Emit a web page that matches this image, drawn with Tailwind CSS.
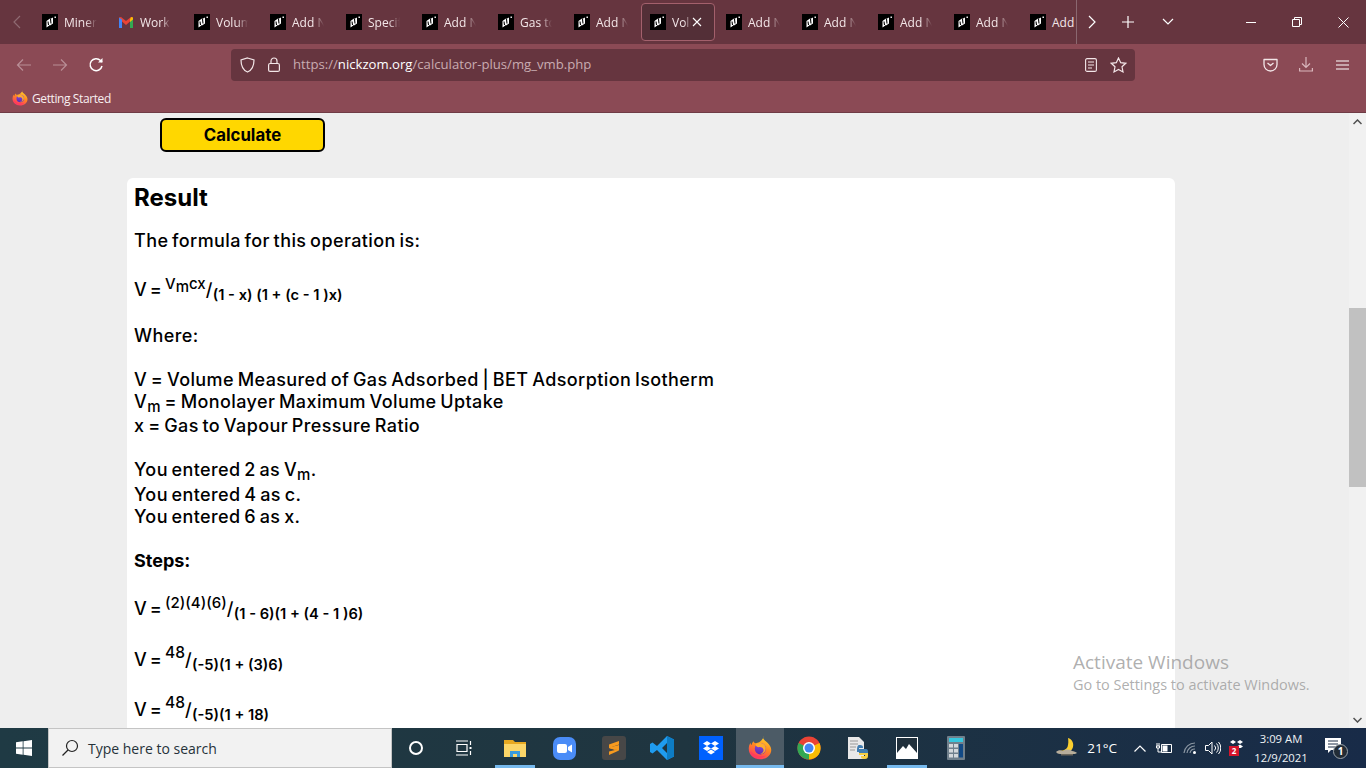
<!doctype html>
<html lang="en">
<head>
<meta charset="utf-8">
<title>Volume Calculator</title>
<script src="https://cdn.jsdelivr.net/npm/@tailwindcss/browser@4"></script>
</head>
<body class="h-screen w-screen overflow-hidden bg-[#eeeeee] font-['Inter',sans-serif]">
<svg class="absolute h-0 w-0" width="0" height="0">
  <defs>
    <linearGradient id="fxa" x1="0.75" y1="0" x2="0.3" y2="1"><stop offset="0" stop-color="#ffd92e"/><stop offset=".45" stop-color="#ff8a1f"/><stop offset="1" stop-color="#ff2f68"/></linearGradient>
    <linearGradient id="fxb" x1="0.6" y1="0" x2="0.4" y2="1"><stop offset="0" stop-color="#8f4fe0"/><stop offset="1" stop-color="#5b2bb0"/></linearGradient>
  </defs>
  <symbol id="fav" viewBox="0 0 16 16">
    <rect width="16" height="16" fill="#000"/>
    <path d="M4.500 7 8 4.500V5L11 3.500V9.500L8 11.500V11L4.500 13.500Z" fill="#fff"/>
    <path d="M6 7.500 6.500 11M8.500 5 9 9.500" stroke="#000" stroke-width="1.100"/>
    <path d="M12.500 2.500h1.400v1.400h-1.400z" fill="#fff"/>
  </symbol>
  <symbol id="fx" viewBox="0 0 32 32">
    <path d="M20 1c0 4 3 5 6 8 3 3 5 6 5 9.500C31 25.500 24.500 31 16 31S1 25 1 17c0-3 .8-5.500 2.200-8 .2 1.500.8 2.500 1.800 3 0-2 1-3.700 2.500-5 0 1.500 1 2.500 3 2.500 3-.5 6-2 7.500-4 1.500-1.500 2.500-3 2.500-4.500z" fill="url(#fxa)"/>
    <circle cx="16.500" cy="17" r="7.500" fill="url(#fxb)"/>
    <path d="M10 11c5-3.500 12-1.500 13.500 4 1 4.500-2.500 9-7.500 9 3.500-1 5.500-3.500 4.500-6.500-1-2.500-4-3.500-6.500-2.500-1.500 0-3.500-1-4-4z" fill="#ffae2b"/>
    <path d="M3 20c1 5 6 9 13 9 3 0 6-1 8-3-6 2-15 1-21-6z" fill="#ff3a5e"/>
  </symbol>
</svg>

<div class="flex h-full flex-col">
  <!-- tab strip -->
  <div class="flex h-[44px] shrink-0 items-center bg-[#66353f] text-[12px] font-['Open_Sans',sans-serif] text-[#f3e6e8]">
    <div class="flex w-[32px] shrink-0 justify-center pl-[2px]">
      <svg width="10" height="14" viewBox="0 0 10 14" fill="none" stroke="#8f6a72" stroke-width="1.200"><path d="M8 1 2 7l6 6"/></svg>
    </div>
    <div class="flex h-full w-[1044px] shrink-0 overflow-hidden">
      <div class="flex h-full w-[76px] shrink-0 items-center gap-[6px] pl-[10px]"><svg class="shrink-0" width="16" height="16"><use href="#fav"/></svg><span class="mt-[2px] w-[33px] overflow-hidden whitespace-nowrap [mask-image:linear-gradient(to_right,black_65%,transparent)]">Minera</span></div>
      <div class="flex h-full w-[76px] shrink-0 items-center gap-[6px] pl-[10px]">
        <svg class="shrink-0" width="16" height="16" viewBox="0 0 16 16"><path d="M1 14V3.500L3 3l5 4 5-4 2 .5V14h-3V7.500L8 11 4 7.500V14z" fill="#ea4335"/><path d="M1 14V3.500L4 5.500V14z" fill="#4285f4"/><path d="M15 14V3.500L12 5.500V14z" fill="#34a853"/><path d="M12 5.500 13 3l2 .5v2L12 8z" fill="#fbbc04"/></svg>
        <span class="mt-[2px] w-[30px] overflow-hidden whitespace-nowrap [mask-image:linear-gradient(to_right,black_75%,transparent)]">Work</span></div>
      <div class="flex h-full w-[76px] shrink-0 items-center gap-[6px] pl-[10px]"><svg class="shrink-0" width="16" height="16"><use href="#fav"/></svg><span class="mt-[2px] w-[32px] overflow-hidden whitespace-nowrap [mask-image:linear-gradient(to_right,black_65%,transparent)]">Volume</span></div>
      <div class="flex h-full w-[76px] shrink-0 items-center gap-[6px] pl-[10px]"><svg class="shrink-0" width="16" height="16"><use href="#fav"/></svg><span class="mt-[2px] w-[32px] overflow-hidden whitespace-nowrap [mask-image:linear-gradient(to_right,black_65%,transparent)]">Add New</span></div>
      <div class="flex h-full w-[76px] shrink-0 items-center gap-[6px] pl-[10px]"><svg class="shrink-0" width="16" height="16"><use href="#fav"/></svg><span class="mt-[2px] w-[32px] overflow-hidden whitespace-nowrap [mask-image:linear-gradient(to_right,black_65%,transparent)]">Specific</span></div>
      <div class="flex h-full w-[76px] shrink-0 items-center gap-[6px] pl-[10px]"><svg class="shrink-0" width="16" height="16"><use href="#fav"/></svg><span class="mt-[2px] w-[32px] overflow-hidden whitespace-nowrap [mask-image:linear-gradient(to_right,black_65%,transparent)]">Add New</span></div>
      <div class="flex h-full w-[76px] shrink-0 items-center gap-[6px] pl-[10px]"><svg class="shrink-0" width="16" height="16"><use href="#fav"/></svg><span class="mt-[2px] w-[32px] overflow-hidden whitespace-nowrap [mask-image:linear-gradient(to_right,black_65%,transparent)]">Gas to V</span></div>
      <div class="flex h-full w-[76px] shrink-0 items-center gap-[6px] pl-[10px]"><svg class="shrink-0" width="16" height="16"><use href="#fav"/></svg><span class="mt-[2px] w-[32px] overflow-hidden whitespace-nowrap [mask-image:linear-gradient(to_right,black_65%,transparent)]">Add New</span></div>
      <div class="relative flex h-full w-[76px] shrink-0 items-center gap-[6px] pl-[10px]">
        <div class="absolute top-[3px] left-[1px] h-[38px] w-[74px] rounded-[4px] border border-[#a3606c] bg-[#532f37]"></div>
        <svg class="relative shrink-0" width="16" height="16"><use href="#fav"/></svg>
        <span class="relative mt-[2px] w-[19px] overflow-hidden whitespace-nowrap [mask-image:linear-gradient(to_right,black_65%,transparent)]">Volume</span>
        <svg class="relative -ml-[5px] shrink-0" width="10" height="10" viewBox="0 0 10 10" stroke="#fff" stroke-width="1.100"><path d="M1 1l8 8M9 1 1 9"/></svg>
      </div>
      <div class="flex h-full w-[76px] shrink-0 items-center gap-[6px] pl-[10px]"><svg class="shrink-0" width="16" height="16"><use href="#fav"/></svg><span class="mt-[2px] w-[32px] overflow-hidden whitespace-nowrap [mask-image:linear-gradient(to_right,black_65%,transparent)]">Add New</span></div>
      <div class="flex h-full w-[76px] shrink-0 items-center gap-[6px] pl-[10px]"><svg class="shrink-0" width="16" height="16"><use href="#fav"/></svg><span class="mt-[2px] w-[32px] overflow-hidden whitespace-nowrap [mask-image:linear-gradient(to_right,black_65%,transparent)]">Add New</span></div>
      <div class="flex h-full w-[76px] shrink-0 items-center gap-[6px] pl-[10px]"><svg class="shrink-0" width="16" height="16"><use href="#fav"/></svg><span class="mt-[2px] w-[32px] overflow-hidden whitespace-nowrap [mask-image:linear-gradient(to_right,black_65%,transparent)]">Add New</span></div>
      <div class="flex h-full w-[76px] shrink-0 items-center gap-[6px] pl-[10px]"><svg class="shrink-0" width="16" height="16"><use href="#fav"/></svg><span class="mt-[2px] w-[32px] overflow-hidden whitespace-nowrap [mask-image:linear-gradient(to_right,black_65%,transparent)]">Add New</span></div>
      <div class="flex h-full w-[56px] shrink-0 items-center gap-[6px] pl-[10px]"><svg class="shrink-0" width="16" height="16"><use href="#fav"/></svg><span class="mt-[2px] whitespace-nowrap">Add</span></div>
    </div>
    <div class="flex h-full w-[30px] shrink-0 items-center justify-center border-l border-[#8a6870]">
      <svg width="10" height="14" viewBox="0 0 10 14" fill="none" stroke="#fff" stroke-width="1.200"><path d="M2 1l6 6-6 6"/></svg>
    </div>
    <div class="ml-[14px] flex w-[16px] shrink-0 justify-center">
      <svg width="12" height="12" viewBox="0 0 12 12" stroke="#fff" stroke-width="1.200"><path d="M6 0v12M0 6h12"/></svg>
    </div>
    <div class="ml-[24px] flex w-[16px] shrink-0 justify-center">
      <svg width="12" height="8" viewBox="0 0 12 8" fill="none" stroke="#fff" stroke-width="1.200"><path d="M1 1l5 5 5-5"/></svg>
    </div>
    <div class="ml-auto flex h-full">
      <div class="flex w-[46px] items-center justify-center"><div class="h-px w-[10px] bg-white"></div></div>
      <div class="flex w-[46px] items-center justify-center">
        <svg width="10" height="10" viewBox="0 0 10 10" fill="none" stroke="#fff"><path d="M.5 2.500h7v7h-7zM2.500 2.500v-2h7v7h-2"/></svg>
      </div>
      <div class="flex w-[46px] items-center justify-center">
        <svg width="11" height="11" viewBox="0 0 11 11" stroke="#fff"><path d="M.5.500l10 10M10.500.500l-10 10"/></svg>
      </div>
    </div>
  </div>

  <!-- nav bar -->
  <div class="relative flex h-[41px] shrink-0 items-center bg-[#8b4a55]">
    <div class="flex w-[231px] shrink-0 items-center pl-[16px]">
      <svg width="16" height="14" viewBox="0 0 16 14" fill="none" stroke="#b98e96" stroke-width="1.200"><path d="M15 7H1.500M7 1.500 1.500 7 7 12.500"/></svg>
      <svg class="ml-[20px]" width="16" height="14" viewBox="0 0 16 14" fill="none" stroke="#b98e96" stroke-width="1.200"><path d="M1 7h13.500M9 1.500 14.500 7 9 12.500"/></svg>
      <svg class="ml-[20px]" width="16" height="16" viewBox="0 0 16 16" fill="none" stroke="#fff" stroke-width="1.500"><path d="M14 9a6 6 0 1 1-1.500-5.500L14 5"/><path d="M14.500 1v4.500H10" fill="#fff" stroke="none"/></svg>
    </div>
    <div class="flex h-[32px] w-[904px] shrink-0 items-center rounded-[4px] bg-[#66353f] pr-[8px] pl-[9px] font-['Open_Sans',sans-serif] text-[13.150px] text-[#c9acb1]">
      <svg class="shrink-0" width="15" height="16" viewBox="0 0 15 16" fill="none" stroke="#f3e6e8" stroke-width="1.200"><path d="M7.500 1 14 3c0 6-1.500 10-6.500 12C2.500 13 1 9 1 3z"/></svg>
      <svg class="ml-[13px] shrink-0" width="12" height="15" viewBox="0 0 12 15" fill="none" stroke="#f3e6e8" stroke-width="1.200"><rect x=".6" y="6.500" width="10.800" height="7.900" rx="1.500"/><path d="M3 6.500V4a3 3 0 0 1 6 0v2.500"/></svg>
      <span class="mt-[1px] ml-[13px] whitespace-nowrap">https://<span class="text-white">nickzom.org</span>/calculator-plus/mg_vmb.php</span>
      <svg class="ml-auto shrink-0" width="12" height="14" viewBox="0 0 12 14" fill="none" stroke="#f3e6e8" stroke-width="1.100"><rect x=".6" y=".6" width="10.800" height="12.800" rx="1.500"/><path d="M3 4h6M3 7h6M3 10h4"/></svg>
      <svg class="ml-[13px] shrink-0" width="17" height="16" viewBox="0 0 17 16" fill="none" stroke="#f3e6e8" stroke-width="1.200"><path d="M8.500 1l2.200 4.700 5 .6-3.700 3.500 1 5.100-4.500-2.500L4 14.900l1-5.100L1.300 6.300l5-.6z"/></svg>
    </div>
    <div class="ml-auto flex items-center pr-[17px]">
      <svg width="15" height="14" viewBox="0 0 15 14" fill="none" stroke="#f3e6e8" stroke-width="1.300"><path d="M1 1.500h13v5a6.500 6.500 0 0 1-13 0z M4.500 5l3 2.500 3-2.500" stroke-linejoin="round"/></svg>
      <svg class="ml-[21px]" width="14" height="15" viewBox="0 0 14 15" fill="none" stroke="#d9b6bc" stroke-width="1.200"><path d="M7 0v10M3 6.500 7 10.500l4-4M.6 11v3h12.800v-3"/></svg>
      <svg class="ml-[23px]" width="13" height="10" viewBox="0 0 13 10" stroke="#fff" stroke-width="1.200"><path d="M0 1h13M0 5h13M0 9h13"/></svg>
    </div>
  </div>

  <!-- bookmarks bar -->
  <div class="flex h-[28px] shrink-0 items-center border-b border-[#6f3b45] bg-[#8b4a55] pb-[2px] pl-[12px] font-['Open_Sans',sans-serif] text-[12px] text-[#f8eff0]">
    <svg width="16" height="16"><use href="#fx"/></svg>
    <span class="mt-[2px] ml-[4px] tracking-[-0.4px]">Getting Started</span>
  </div>

  <!-- page -->
  <div class="relative flex min-h-0 flex-1 overflow-hidden">
    <div class="min-w-0 flex-1 overflow-hidden">
      <button class="mt-[5px] ml-[160px] block h-[34px] w-[165px] rounded-[6px] border-2 border-black bg-[#ffd700] pt-[1px] text-[16.800px] font-bold text-black">Calculate</button>
      <div class="mt-[26px] ml-[127px] h-[600px] w-[1048px] rounded-t-[6px] bg-white px-[7px] pt-[6px] text-[18px] leading-[24px] font-medium tracking-[0.4px] text-black [word-spacing:-1.500px]">
        <h2 class="text-[24px] leading-[28px] font-bold tracking-normal [word-spacing:0]">Result</h2>
        <p class="mt-[17px]">The formula for this operation is:</p>
        <p class="relative mt-[25px]"><span class="[word-spacing:-2.500px]">V = </span><sup class="text-[15px] tracking-normal">V<sub class="text-[15px]">m</sub>cx</sup>/<sub class="text-[14.700px] font-semibold tracking-normal [word-spacing:0]">(1 - x) (1 + (c - 1 )x)</sub></p>
        <p class="mt-[22px]">Where:</p>
        <p class="mt-[20px]">V = Volume Measured of Gas Adsorbed | BET Adsorption Isotherm</p>
        <p class="mt-[-2px]">V<sub class="text-[15px]">m</sub> = Monolayer Maximum Volume Uptake</p>
        <p>x = Gas to Vapour Pressure Ratio</p>
        <p class="mt-[20px]">You entered 2 as V<sub class="text-[15px]">m</sub>.</p>
        <p class="mt-px">You entered 4 as c.</p>
        <p class="-mt-[2px]">You entered 6 as x.</p>
        <p class="mt-[20px] font-bold tracking-normal">Steps:</p>
        <p class="mt-[24px]"><span class="[word-spacing:-2.500px]">V = </span><sup class="text-[15px] tracking-normal">(2)(4)(6)</sup>/<sub class="text-[14.700px] font-semibold tracking-normal [word-spacing:0]">(1 - 6)(1 + (4 - 1 )6)</sub></p>
        <p class="mt-[27px]"><span class="[word-spacing:-2.500px]">V = </span><sup class="text-[15.500px] tracking-normal">48</sup>/<sub class="text-[14.700px] font-semibold tracking-normal [word-spacing:0]">(-5)(1 + (3)6)</sub></p>
        <p class="mt-[26px]"><span class="[word-spacing:-2.500px]">V = </span><sup class="text-[15.500px] tracking-normal">48</sup>/<sub class="text-[14.700px] font-semibold tracking-normal [word-spacing:0]">(-5)(1 + 18)</sub></p>
      </div>
    </div>
    <!-- scrollbar -->
    <div class="flex w-[17px] shrink-0 flex-col bg-[#f1f1f1]">
      <div class="flex h-[17px] items-center justify-center"><svg width="9" height="6" viewBox="0 0 9 6" fill="none" stroke="#505050" stroke-width="1.500"><path d="M.5 5l4-4 4 4"/></svg></div>
      <div class="mt-[178px] h-[179px] bg-[#c1c1c1]"></div>
      <div class="mt-auto flex h-[17px] items-center justify-center"><svg width="9" height="6" viewBox="0 0 9 6" fill="none" stroke="#505050" stroke-width="1.500"><path d="M.5 1l4 4 4-4"/></svg></div>
    </div>
    <!-- activation watermark -->
    <div class="pointer-events-none absolute top-[536px] left-[1073px] font-['Open_Sans',sans-serif] text-[#9a9a9a]/80">
      <div class="text-[19px] leading-[26px]">Activate Windows</div>
      <div class="text-[14.450px] leading-[20px] whitespace-nowrap">Go to Settings to activate Windows.</div>
    </div>
  </div>

  <!-- taskbar -->
  <div class="flex h-[40px] shrink-0 items-center bg-linear-to-r from-[#1f3a44] via-[#1f3540] to-[#182b48] font-['Open_Sans',sans-serif] text-white">
    <div class="flex h-full w-[48px] shrink-0 items-center justify-center">
      <svg width="16" height="16" viewBox="0 0 16 16" fill="#fff"><path d="M0 2.300 6.700 1.300V7.600H0zM7.500 1.200 16 0v7.600H7.500zM0 8.400h6.700v6.300L0 13.700zM7.500 8.400H16V16l-8.500-1.200z"/></svg>
    </div>
    <div class="flex h-full w-[344px] shrink-0 items-center border border-[#c4c4c4] bg-[#f2f2f2] pl-[12px] text-[14px] text-[#26323a]">
      <svg width="18" height="18" viewBox="0 0 18 18" fill="none" stroke="#222" stroke-width="1.200"><circle cx="11" cy="7" r="5.500"/><path d="M7 11 1.500 16.500"/></svg>
      <span class="ml-[9px]">Type here to search</span>
    </div>
    <div class="flex h-full w-[48px] shrink-0 items-center justify-center">
      <div class="h-[14px] w-[14px] rounded-full border-2 border-white"></div>
    </div>
    <div class="flex h-full w-[48px] shrink-0 items-center justify-center">
      <svg width="18" height="16" viewBox="0 0 18 16" fill="none" stroke="#fff" stroke-width="1.200"><path d="M1 1h12M1 15h12M2 4.500h10v7H2zM15.500 1v4M15.500 11v4"/><path d="M14.500 7h2v2h-2z" fill="#fff" stroke="none"/></svg>
    </div>
    <div class="ml-[2px] flex h-full w-[49px] shrink-0 justify-center">
      <div class="flex h-full w-[40px] items-center justify-center border-b-[3px] border-[#76b9ed] pt-[3px]">
        <svg width="22" height="19" viewBox="0 0 22 19"><path d="M0 1h9l2 2h11v14H0z" fill="#e8a921"/><path d="M0 5h22v13H0z" fill="#fcd668"/><path d="M6 18v-6h10v6h-3v-3H9v3z" fill="#3a9bdc"/></svg>
      </div>
    </div>
    <div class="flex h-full w-[50px] shrink-0 items-center justify-center">
      <div class="flex h-[23px] w-[23px] items-center justify-center rounded-[7px] bg-[#4a8cf7]">
        <svg width="15" height="9" viewBox="0 0 15 9" fill="#fff"><rect width="10" height="9" rx="2"/><path d="M11 3l4-2.500v8L11 6z"/></svg>
      </div>
    </div>
    <div class="flex h-full w-[50px] shrink-0 items-center justify-center">
      <div class="flex h-[24px] w-[24px] items-center justify-center rounded-[3px] bg-[#474747]">
        <svg width="12" height="16" viewBox="0 0 12 16" fill="#f79a1f"><path d="M11 1v3.500L1 8V4.500z"/><path d="M1 7l10 3.500L1 15v-3.500L7 10 1 8z"/><path d="M1 7.500 11 5v5.500L1 8z"/></svg>
      </div>
    </div>
    <div class="flex h-full w-[46px] shrink-0 items-center justify-center">
      <svg width="24" height="24" viewBox="0 0 24 24"><path d="M17 0 24 3.500v17L17 24 7 14l-4.500 3.500L0 16V8l2.500-1.500L7 10zM17 7l-5 5 5 5z" fill="#1f9cf0"/><path d="M17 0 24 3.500v17L17 24z" fill="#0d7cc4"/></svg>
    </div>
    <div class="flex h-full w-[51px] shrink-0 items-center justify-center">
      <div class="flex h-[24px] w-[24px] items-center justify-center bg-[#0061fe]">
        <svg width="16" height="14" viewBox="0 0 16 14" fill="#fff"><path d="M4 0 8 2.500 4 5 0 2.500zM12 0l4 2.500L12 5 8 2.500zM4 5l4 2.500L4 10 0 7.500zM12 5l4 2.500-4 2.500-4-2.500zM4 11l4-2.500 4 2.500-4 2.500z"/></svg>
      </div>
    </div>
    <div class="flex h-full w-[48px] shrink-0 items-center justify-center border-b-[3px] border-[#76b9ed] bg-[#4c5b66] pt-[3px]">
      <svg width="24" height="24"><use href="#fx"/></svg>
    </div>
    <div class="flex h-full w-[50px] shrink-0 items-center justify-center">
      <svg width="24" height="24" viewBox="0 0 24 24"><circle cx="12" cy="12" r="11.500" fill="#ea4335"/><path d="M12 12 22.500 7A11.500 11.500 0 0 1 12 23.500z" fill="#fbbc04"/><path d="M12 12 12 23.500A11.500 11.500 0 0 1 1.500 7z" fill="#34a853"/><circle cx="12" cy="12" r="6" fill="#fff"/><circle cx="12" cy="12" r="4.500" fill="#4285f4"/></svg>
    </div>
    <div class="flex h-full w-[48px] shrink-0 items-center justify-center">
      <svg width="24" height="24" viewBox="0 0 24 24"><path d="M2 1h11l5 5v17H2z" fill="#e9e9e9"/><path d="M4 5h8M4 8h8M4 11h6M4 14h5" stroke="#999"/><path d="M13 9c4 0 4 1 4 3h-4v1h7c2 0 2 2 2 3v1h-9v-1h-2c0-3 0-7 2-7z" fill="#3f7cb0"/><path d="M19 23c-4 0-4-1-4-3h4v-1h-6v-2h9v3c0 2-1 3-3 3z" fill="#f7cf45"/></svg>
    </div>
    <div class="flex h-full w-[50px] shrink-0 justify-center">
      <div class="flex h-full w-[40px] items-center justify-center border-b-[3px] border-[#76b9ed] pt-[3px]">
        <svg width="22" height="22" viewBox="0 0 22 22"><rect width="22" height="22" fill="#fff"/><rect x="1" y="1" width="20" height="20" fill="#1f2f3b"/><path d="M1 21V16l6-7 3 3 3-5 8 9v5z" fill="#fff"/></svg>
      </div>
    </div>
    <div class="flex h-full w-[48px] shrink-0 items-center justify-center">
      <svg width="18" height="24" viewBox="0 0 18 24"><rect width="18" height="24" rx="1" fill="#70808c"/><rect x="2" y="2" width="14" height="4" fill="#37c6dd"/><path d="M2 8h4v3.500H2zM7 8h4v3.500H7zM2 13h4v3.500H2zM7 13h4v3.500H7zM2 18h4v3.500H2zM7 18h4v3.500H7z" fill="#d4d8db"/><path d="M12 8h4v13.500h-4z" fill="#124a86"/></svg>
    </div>
    <div class="ml-auto flex h-full items-center">
      <svg width="24" height="22" viewBox="0 0 24 22"><path d="M13 1c4 1 6 5 5 9-.5 2-1.500 3-3 4H4c3 0 7-1 8.500-4 1-3 1-6 .5-9z" fill="#fbcf2f"/><path d="M1 15c2-2 5-2 7-1 2-2 7-2 9 0 2 0 4 1 5 2-1 1-3 1-5 1H5c-2 0-3-1-4-2z" fill="#b7ad9b"/><path d="M6 17h12v1.500H6z" fill="#6c675c"/></svg>
      <span class="ml-[8px] text-[13.500px]">21°C</span>
      <svg class="ml-[17px]" width="12" height="7" viewBox="0 0 12 7" fill="none" stroke="#fff" stroke-width="1.200"><path d="M.5 6.500 6 1l5.500 5.500"/></svg>
      <svg class="ml-[10px]" width="16" height="12" viewBox="0 0 16 12" fill="none" stroke="#fff"><path d="M5.500 2.500h10v8h-10zM3 1v3M1 1v3M.5 4h3v2h-3zM2 6v4h3.500"/><path d="M6.500 3.500h5v6h-5z" fill="#fff" stroke="none"/></svg>
      <svg class="ml-[11px]" width="14" height="12" viewBox="0 0 14 12" fill="none" stroke="#8b97a3" stroke-width="1.200"><path d="M1 11a11 11 0 0 1 11-10M4 11a8 8 0 0 1 8-7M7 11a5 5 0 0 1 5-4"/><circle cx="11.500" cy="10.500" r="1.500" fill="#fff" stroke="none"/></svg>
      <svg class="ml-[8px]" width="16" height="14" viewBox="0 0 16 14" fill="none" stroke="#fff"><path d="M.5 4.500h3L7 1v12L3.500 9.500h-3zM9.500 4.500a3.500 3.500 0 0 1 0 5M11.500 2.500a6.500 6.500 0 0 1 0 9M13.500 1a9 9 0 0 1 0 12"/></svg>
      <div class="relative ml-[8px] h-[16px] w-[16px]">
        <svg width="16" height="8" viewBox="0 0 16 8" fill="#fff"><path d="M4 0 7 2 4 4 1 2zM11 0l3 2-3 2-3-2zM11 4.500l3 2-3 2-3-2z"/></svg>
        <div class="absolute top-[6px] left-0 flex h-[10px] w-[10px] items-center justify-center bg-[#d6142b] text-[8px] leading-none font-bold">2</div>
      </div>
      <div class="ml-[10px] flex w-[52px] flex-col items-center text-[11.300px] leading-[19px] whitespace-nowrap text-[#eef2f5]"><span>3:09 AM</span><span>12/9/2021</span></div>
      <div class="relative mr-[25px] ml-[18px] h-[20px] w-[16px]">
        <svg width="16" height="15" viewBox="0 0 16 15"><path d="M0 0h16v12H6l-3 3v-3H0z" fill="#fff"/><path d="M3 3h10M3 6h10M3 9h7" stroke="#1c2f48"/></svg>
        <div class="absolute top-[6px] left-[8px] flex h-[15px] w-[15px] items-center justify-center rounded-full border border-[#9aa3ab] bg-[#222c36] text-[10px] font-bold">1</div>
      </div>
    </div>
  </div>
</div>
</body>
</html>
